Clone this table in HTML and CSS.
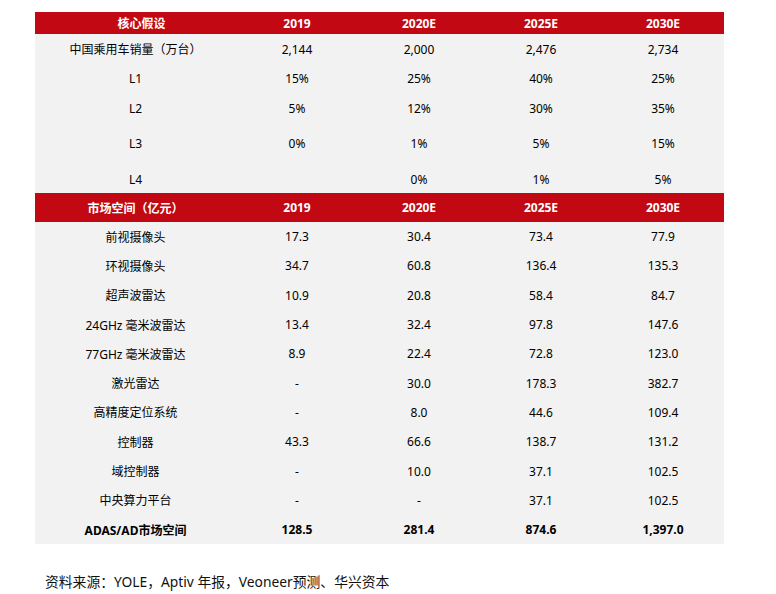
FILE: index.html
```html
<!DOCTYPE html>
<html lang="zh">
<head>
<meta charset="utf-8">
<title>ADAS/AD市场空间</title>
<link rel="stylesheet" href="styles.css">
</head>
<body>
<div class="sheet">
  <div class="tbl">
    <div class="row head h1">
      <div class="c first hdr-shift">核心假设</div><div class="c">2019</div><div class="c">2020E</div><div class="c">2025E</div><div class="c">2030E</div>
    </div>
    <div class="row r30">
      <div class="c first">中国乘用车销量（万台）</div><div class="c">2,144</div><div class="c">2,000</div><div class="c">2,476</div><div class="c">2,734</div>
    </div>
    <div class="row r29">
      <div class="c first">L1</div><div class="c">15%</div><div class="c">25%</div><div class="c">40%</div><div class="c">25%</div>
    </div>
    <div class="row r31">
      <div class="c first">L2</div><div class="c">5%</div><div class="c">12%</div><div class="c">30%</div><div class="c">35%</div>
    </div>
    <div class="row r38">
      <div class="c first">L3</div><div class="c">0%</div><div class="c">1%</div><div class="c">5%</div><div class="c">15%</div>
    </div>
    <div class="row r31 low">
      <div class="c first">L4</div><div class="c"></div><div class="c">0%</div><div class="c">1%</div><div class="c">5%</div>
    </div>
    <div class="row head h2">
      <div class="c first">市场空间（亿元）</div><div class="c">2019</div><div class="c">2020E</div><div class="c">2025E</div><div class="c">2030E</div>
    </div>
    <div class="row rm">
      <div class="c first">前视摄像头</div><div class="c">17.3</div><div class="c">30.4</div><div class="c">73.4</div><div class="c">77.9</div>
    </div>
    <div class="row rm">
      <div class="c first">环视摄像头</div><div class="c">34.7</div><div class="c">60.8</div><div class="c">136.4</div><div class="c">135.3</div>
    </div>
    <div class="row rm">
      <div class="c first">超声波雷达</div><div class="c">10.9</div><div class="c">20.8</div><div class="c">58.4</div><div class="c">84.7</div>
    </div>
    <div class="row rm">
      <div class="c first">24GHz 毫米波雷达</div><div class="c">13.4</div><div class="c">32.4</div><div class="c">97.8</div><div class="c">147.6</div>
    </div>
    <div class="row rm">
      <div class="c first">77GHz 毫米波雷达</div><div class="c">8.9</div><div class="c">22.4</div><div class="c">72.8</div><div class="c">123.0</div>
    </div>
    <div class="row rm">
      <div class="c first">激光雷达</div><div class="c">-</div><div class="c">30.0</div><div class="c">178.3</div><div class="c">382.7</div>
    </div>
    <div class="row rm">
      <div class="c first">高精度定位系统</div><div class="c">-</div><div class="c">8.0</div><div class="c">44.6</div><div class="c">109.4</div>
    </div>
    <div class="row rm">
      <div class="c first">控制器</div><div class="c">43.3</div><div class="c">66.6</div><div class="c">138.7</div><div class="c">131.2</div>
    </div>
    <div class="row rm">
      <div class="c first">域控制器</div><div class="c">-</div><div class="c">10.0</div><div class="c">37.1</div><div class="c">102.5</div>
    </div>
    <div class="row rm">
      <div class="c first">中央算力平台</div><div class="c">-</div><div class="c">-</div><div class="c">37.1</div><div class="c">102.5</div>
    </div>
    <div class="row rm total">
      <div class="c first">ADAS/AD市场空间</div><div class="c">128.5</div><div class="c">281.4</div><div class="c">874.6</div><div class="c">1,397.0</div>
    </div>
  </div>
  <p class="source">资料来源：YOLE，Aptiv 年报，Veoneer预测、华兴资本</p>
</div>
</body>
</html>
```

FILE: styles.css
```css
html, body {
  margin: 0;
  padding: 0;
  background: #ffffff;
}

body {
  font-family: "Noto Sans", "Noto Sans CJK SC", sans-serif;
  color: #000000;
  font-size: 12px;
}

.sheet {
  width: 776px;
  height: 594px;
  padding: 12px 0 0 35px;
  box-sizing: border-box;
}

.tbl {
  width: 689px;
  background: #f2f2f2;
}

.row {
  display: grid;
  grid-template-columns: 201px repeat(4, 122px);
}

.c {
  display: flex;
  align-items: center;
  justify-content: center;
  white-space: nowrap;
}

.head {
  background: #c20913;
  color: #ffffff;
  font-weight: 700;
}

.h1 { height: 22px; }
.h2 { height: 29px; }

.hdr-shift { padding-left: 12px; }

.r29 { height: 29px; }
.r30 { height: 30px; }
.r31 { height: 31px; }
.r38 { height: 38px; }
.rm { height: 29.3px; }

.low .c { padding-top: 4px; }

.total { font-weight: 700; }

.source {
  margin: 28px 0 0 10px;
  font-size: 13.8px;
  line-height: 20px;
  color: #111111;
}
```
